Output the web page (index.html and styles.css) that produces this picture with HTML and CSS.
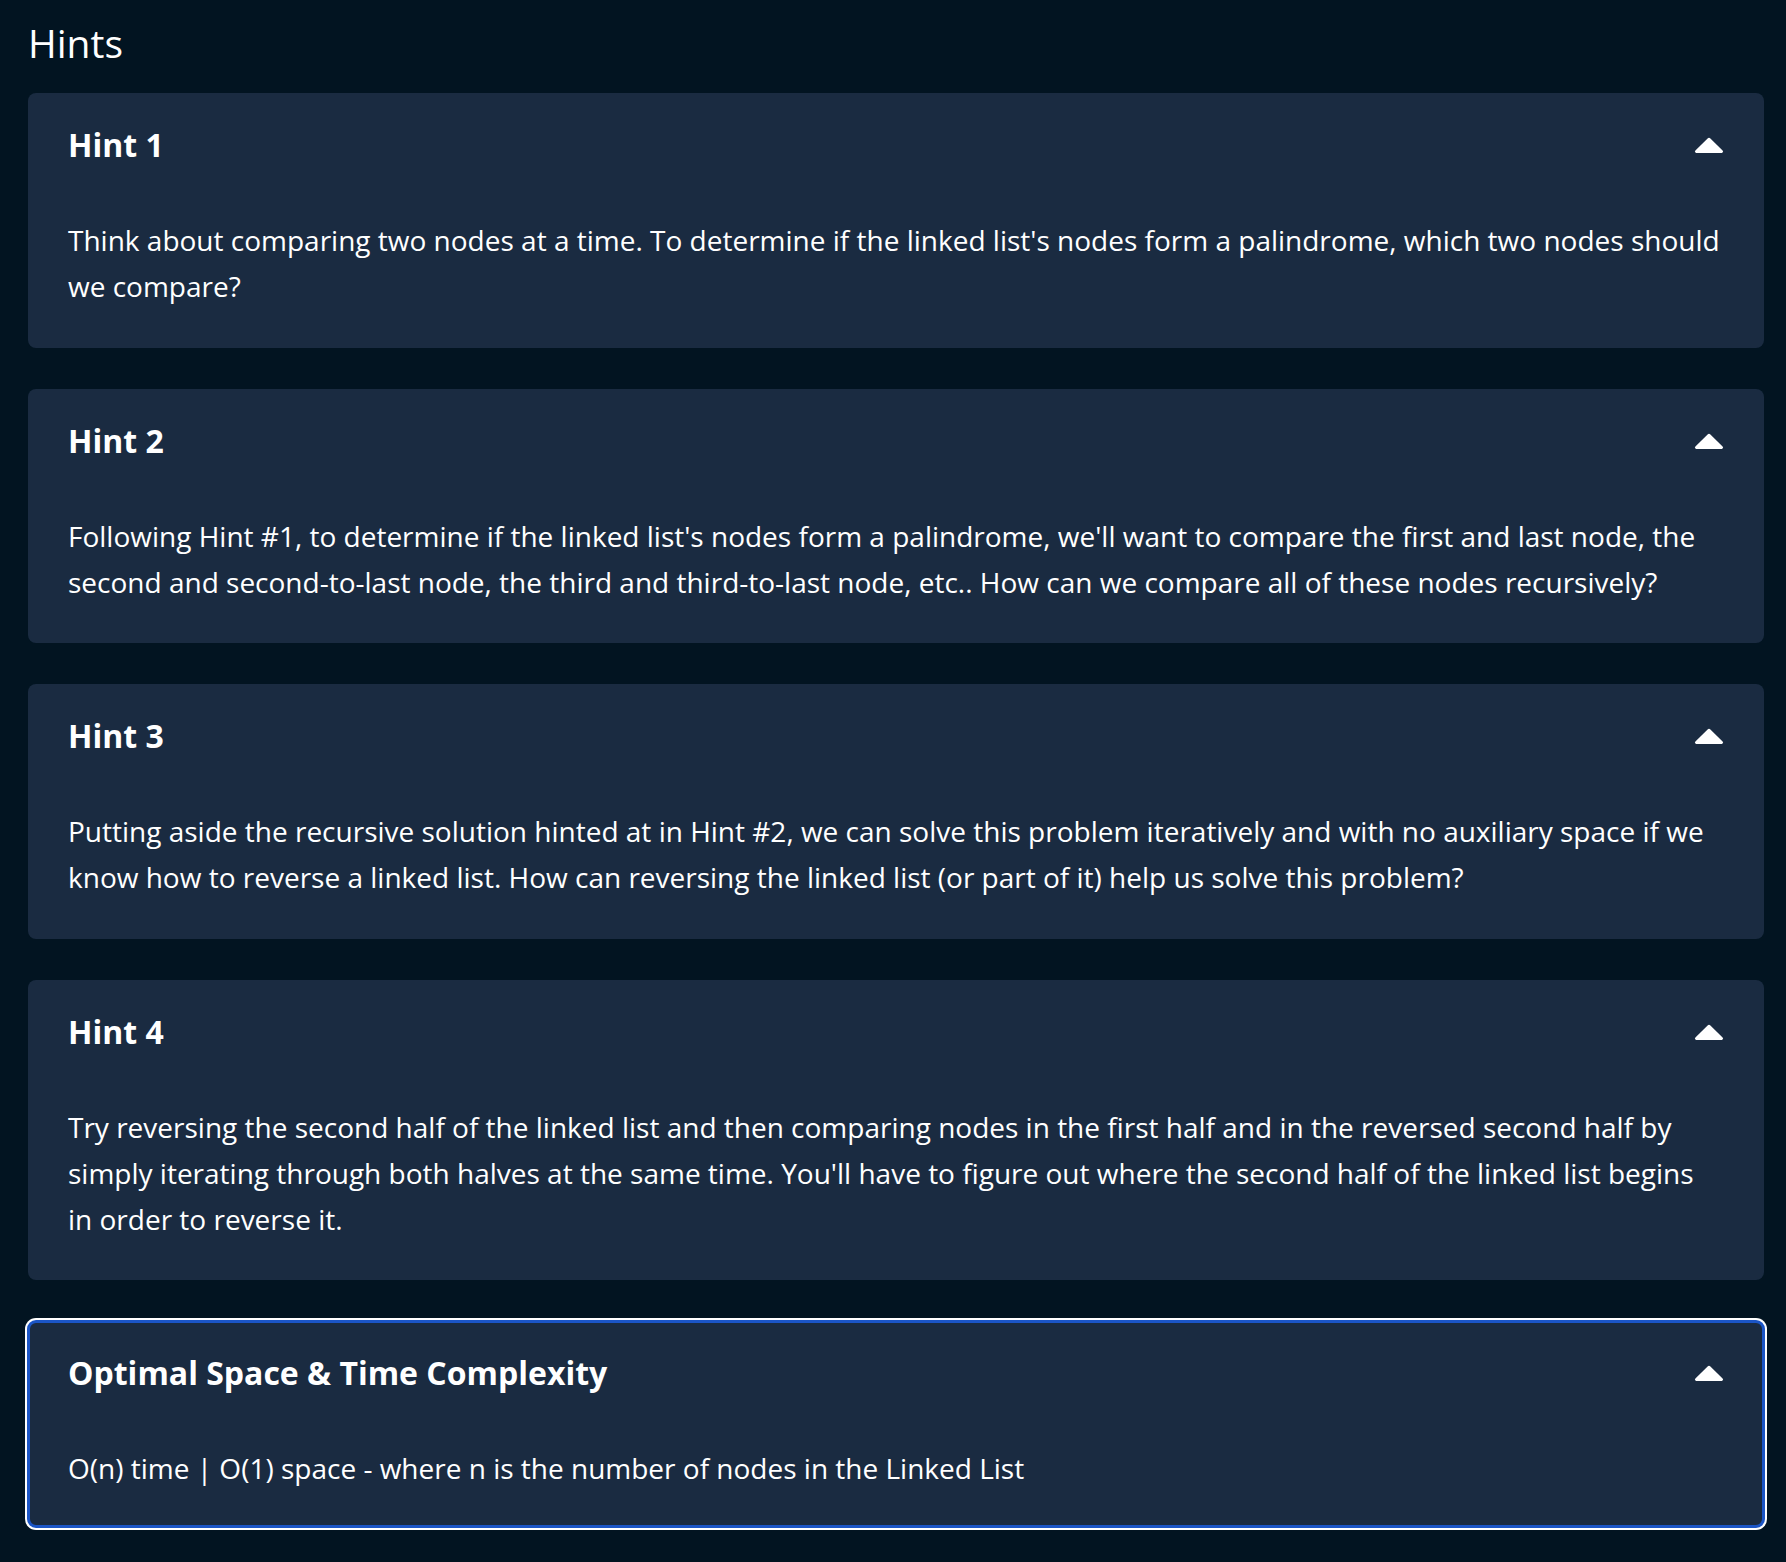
FILE: index.html
```html
<!DOCTYPE html>
<html lang="en">
<head>
<meta charset="utf-8">
<title>Hints</title>
<link rel="stylesheet" href="styles.css">
</head>
<body>
<main class="page">
  <h2 class="page-title">Hints</h2>
  <section class="hints">
    <article class="hint">
      <header class="hint-head">
        <h3 class="hint-title">Hint 1</h3>
        <svg class="caret" viewBox="0 0 30 16" aria-hidden="true"><path d="M13.6 1.4 Q15 0 16.4 1.4 L28.6 13.6 Q30 15 28 16 L2 16 Q0 15 1.4 13.6 Z"/></svg>
      </header>
      <p class="hint-body">Think about comparing two nodes at a time. To determine if the linked list's nodes form a palindrome, which two nodes should we compare?</p>
    </article>
    <article class="hint">
      <header class="hint-head">
        <h3 class="hint-title">Hint 2</h3>
        <svg class="caret" viewBox="0 0 30 16" aria-hidden="true"><path d="M13.6 1.4 Q15 0 16.4 1.4 L28.6 13.6 Q30 15 28 16 L2 16 Q0 15 1.4 13.6 Z"/></svg>
      </header>
      <p class="hint-body">Following Hint #1, to determine if the linked list's nodes form a palindrome, we'll want to compare the first and last node, the second and second-to-last node, the third and third-to-last node, etc.. How can we compare all of these nodes recursively?</p>
    </article>
    <article class="hint">
      <header class="hint-head">
        <h3 class="hint-title">Hint 3</h3>
        <svg class="caret" viewBox="0 0 30 16" aria-hidden="true"><path d="M13.6 1.4 Q15 0 16.4 1.4 L28.6 13.6 Q30 15 28 16 L2 16 Q0 15 1.4 13.6 Z"/></svg>
      </header>
      <p class="hint-body">Putting aside the recursive solution hinted at in Hint #2, we can solve this problem iteratively and with no auxiliary space if we know how to reverse a linked list. How can reversing the linked list (or part of it) help us solve this problem?</p>
    </article>
    <article class="hint">
      <header class="hint-head">
        <h3 class="hint-title">Hint 4</h3>
        <svg class="caret" viewBox="0 0 30 16" aria-hidden="true"><path d="M13.6 1.4 Q15 0 16.4 1.4 L28.6 13.6 Q30 15 28 16 L2 16 Q0 15 1.4 13.6 Z"/></svg>
      </header>
      <p class="hint-body">Try reversing the second half of the linked list and then comparing nodes in the first half and in the reversed second half by simply iterating through both halves at the same time. You'll have to figure out where the second half of the linked list begins in order to reverse it.</p>
    </article>
    <article class="hint hint-focused">
      <header class="hint-head">
        <h3 class="hint-title">Optimal Space &amp; Time Complexity</h3>
        <svg class="caret" viewBox="0 0 30 16" aria-hidden="true"><path d="M13.6 1.4 Q15 0 16.4 1.4 L28.6 13.6 Q30 15 28 16 L2 16 Q0 15 1.4 13.6 Z"/></svg>
      </header>
      <p class="hint-body">O(n) time | O(1) space - where n is the number of nodes in the Linked List</p>
    </article>
  </section>
</main>
</body>
</html>
```

FILE: styles.css
```css
html, body {
  margin: 0;
  padding: 0;
  background: #021421;
}

body {
  font-family: "Open Sans", "Noto Sans", "DejaVu Sans", sans-serif;
  color: #ffffff;
}

.page {
  width: 1736px;
  padding: 19px 0 40px 28px;
}

.page-title {
  margin: 0;
  font-size: 39px;
  line-height: 48px;
  font-weight: 400;
}

.hints {
  margin-top: 26px;
  display: flex;
  flex-direction: column;
  gap: 41px;
}

.hint {
  background: #1a2b41;
  border-radius: 8px;
  padding: 30px 40px 38.5px 40px;
  box-sizing: border-box;
}

.hint-head {
  display: flex;
  align-items: center;
  justify-content: space-between;
  height: 44px;
}

.hint-title {
  margin: 0;
  font-size: 32px;
  line-height: 44px;
  font-weight: 700;
}

.caret {
  width: 30px;
  height: 16px;
  fill: #ffffff;
  flex: none;
}

.hint-body {
  margin: 50px 0 0 0;
  font-size: 28px;
  line-height: 46px;
  font-weight: 400;
}

.hint-focused {
  border: 2px solid #1b55c6;
  box-shadow: 0 0 0 1px #1b55c6, 0 0 0 3px #ffffff;
  padding: 28px 38px 34px 38px;
}
```
